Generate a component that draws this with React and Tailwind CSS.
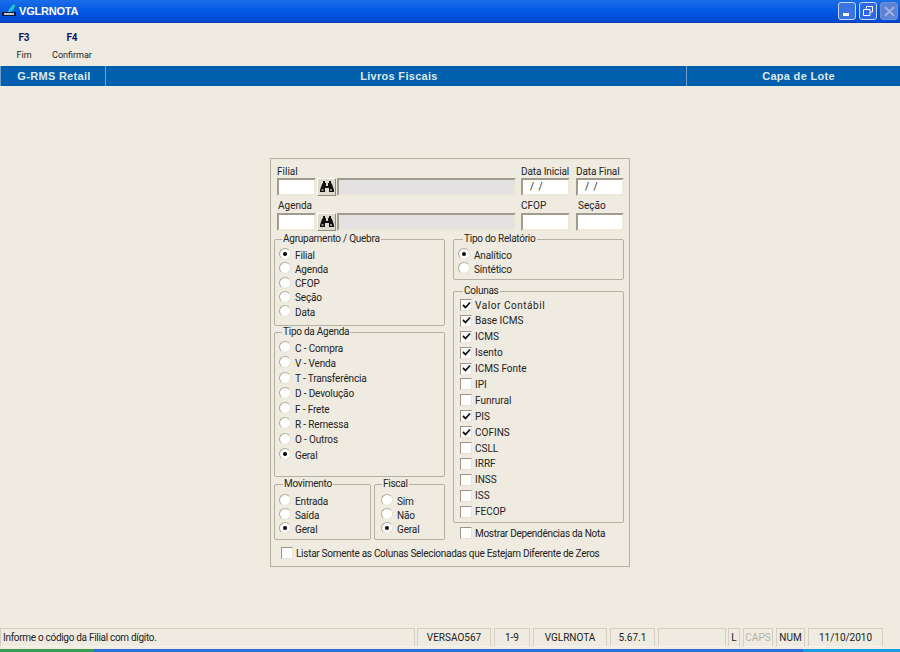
// App.jsx
import React from 'react';

const Radio = ({ label, checked }) => (
  <div className="flex items-center h-[14px]">
    <span className="w-3 h-3 rounded-full bg-white border border-[#e6e3d6] border-t-[#aeab9d] border-l-[#aeab9d] flex items-center justify-center shrink-0">
      {checked && <span className="w-1 h-1 rounded-full bg-black" />}
    </span>
    <span className="ml-[4px] pt-[2px] whitespace-nowrap tracking-[-0.15px]">{label}</span>
  </div>
);

const Check = ({ label, checked, textClass = '' }) => (
  <div className="flex items-center h-[14px]">
    <span className="w-[10px] h-[10px] box-content bg-white border border-[#e6e3d6] border-t-[#98958a] border-l-[#98958a] flex items-center justify-center shrink-0">
      {checked && (
        <svg width="9" height="9" viewBox="0 0 9 9">
          <path d="M1 4 L3.5 6.5 L8 1.5" fill="none" stroke="#111" strokeWidth="1.8" />
        </svg>
      )}
    </span>
    <span className={`ml-[3px] whitespace-nowrap ${textClass}`}>{label}</span>
  </div>
);

const Group = ({ title, className, legendClass = 'ml-[3px]', children }) => (
  <fieldset className={`border border-[#b4b1a2] rounded-[2px] pl-[4px] ${className}`}>
    <legend className={`px-[1px] leading-[12px] tracking-[-0.25px] ${legendClass}`}>{title}</legend>
    {children}
  </fieldset>
);

const Field = ({ className, children }) => (
  <div className={`h-[18px] bg-white border-2 border-[#ece9d8] border-t-[#a09d8e] border-l-[#a09d8e] leading-[14px] ${className}`}>
    {children}
  </div>
);

const Binoculars = () => (
  <button className="w-[19px] h-[18px] ml-[1px] bg-[#dedbce] border border-[#fff] border-r-[#8f8c7f] border-b-[#8f8c7f] flex items-center justify-center">
    <svg width="14" height="12" viewBox="0 0 14 12">
      <path
        d="M3 0h2v2h1v3h2V2h1V0h2v2l1 1 2 6v2H9V7H5v4H0V9l2-6 1-1z"
        fill="#111"
      />
      <rect x="1.5" y="8" width="2" height="2" fill="#8a8a8a" />
      <rect x="10" y="8" width="2" height="2" fill="#8a8a8a" />
    </svg>
  </button>
);

const StatusCell = ({ className, children }) => (
  <div className={`h-[19px] border border-[#d3d0c2] border-b-[#f7f5ec] flex items-center justify-center shrink-0 ${className}`}>
    {children}
  </div>
);

const agrupamento = ['Filial', 'Agenda', 'CFOP', 'Seção', 'Data'];
const agendas = ['C - Compra', 'V - Venda', 'T - Transferência', 'D - Devolução', 'F - Frete', 'R - Remessa', 'O - Outros', 'Geral'];
const colunas = [
  ['Valor Contábil', true],
  ['Base ICMS', true],
  ['ICMS', true],
  ['Isento', true],
  ['ICMS Fonte', true],
  ['IPI', false],
  ['Funrural', false],
  ['PIS', true],
  ['COFINS', true],
  ['CSLL', false],
  ['IRRF', false],
  ['INSS', false],
  ['ISS', false],
  ['FECOP', false],
];

export default function App() {
  return (
    <div className="w-[900px] h-[652px] overflow-hidden flex flex-col bg-[#efebe0] text-[10px] text-[#222] font-['Roboto','Liberation_Sans',sans-serif]">
      {/* barra de titulo */}
      <div className="h-[23px] shrink-0 flex items-center pl-[2px] pr-[2px] bg-gradient-to-b from-[#1a6ee8] via-[#0358e4] to-[#0349cf] border-b border-b-[#0e3fb0]">
        <svg width="16" height="14" viewBox="0 0 16 14" className="shrink-0">
          <path d="M6 8 C7 4 10 1 13 0 C13 4 11 7 8 8z" fill="#22c8c8" />
          <rect x="0" y="8" width="14" height="4" fill="#0c1a3e" />
          <rect x="2" y="9" width="10" height="2" fill="#b9c7da" />
        </svg>
        <span className="ml-[1px] text-[11px] font-bold text-white font-['Liberation_Sans',sans-serif] tracking-[-0.2px]">VGLRNOTA</span>
        <div className="ml-auto flex gap-[3px]">
          <div className="w-[18px] h-[18px] rounded-[3px] border border-[#c8d8f8] bg-[#3a73e4] flex items-end pl-[4px] pb-[3px]">
            <span className="w-[6px] h-[3px] bg-white" />
          </div>
          <div className="w-[18px] h-[18px] rounded-[3px] border border-[#c8d8f8] bg-[#2f68e2] flex items-center justify-center">
            <svg width="10" height="10" viewBox="0 0 10 10">
              <path d="M3.5 2.5V.5h6v5.5H7.5M.5 3.5h6.5v6H.5z" fill="none" stroke="#fff" />
            </svg>
          </div>
          <div className="w-[18px] h-[18px] rounded-[3px] border border-[#6e92dc] bg-[#5d83d2] flex items-center justify-center">
            <svg width="11" height="11" viewBox="0 0 11 11">
              <path d="M1 1 L10 10 M10 1 L1 10" stroke="#9fb4e0" strokeWidth="2" />
            </svg>
          </div>
        </div>
      </div>

      {/* barra de atalhos */}
      <div className="h-[43px] shrink-0 flex pt-[9px] pl-[6px] bg-[#efebe0]">
        <div className="w-[36px] flex flex-col items-center">
          <span className="font-bold text-[#14146e] leading-[12px]">F3</span>
          <span className="mt-[5px] leading-[12px] text-[9px]">Fim</span>
        </div>
        <div className="w-[60px] flex flex-col items-center">
          <span className="font-bold text-[#14146e] leading-[12px]">F4</span>
          <span className="mt-[5px] leading-[12px] text-[9px]">Confirmar</span>
        </div>
      </div>

      {/* faixa azul */}
      <div className="h-[20px] shrink-0 flex bg-[#0160ae] text-[#dfe8ee] font-bold text-[11px] tracking-[0.3px] font-['Liberation_Sans',sans-serif]">
        <div className="w-[106px] border-x border-[#6f9fd0] flex items-center justify-center pl-[2px]">G-RMS Retail</div>
        <div className="flex-1 flex items-center justify-center pl-[6px]">Livros Fiscais</div>
        <div className="w-[214px] border-l border-[#6f9fd0] flex items-center justify-center pl-[10px]">Capa de Lote</div>
      </div>

      {/* area principal */}
      <div className="flex-1 min-h-0 pt-[72px] pl-[270px]">
        <div className="w-[360px] h-[409px] border border-[#b4b1a2] px-[3px] pt-[7px]">
          {/* filial */}
          <div className="flex pl-[3px]">
            <div className="w-[244px]">
              <div className="leading-[12px]">Filial</div>
              <div className="flex">
                <Field className="w-[39px]" />
                <Binoculars />
                <Field className="w-[179px] ml-[1px] !bg-[#e4e1e3]" />
              </div>
            </div>
            <div className="w-[55px]">
              <div className="leading-[12px] whitespace-nowrap tracking-[-0.1px]">Data Inicial</div>
              <Field className="w-[49px] pl-[7px] tracking-[1px]">/ /</Field>
            </div>
            <div>
              <div className="leading-[12px] whitespace-nowrap tracking-[-0.1px]">Data Final</div>
              <Field className="w-[48px] pl-[7px] tracking-[1px]">/ /</Field>
            </div>
          </div>

          {/* agenda */}
          <div className="flex pl-[3px] mt-[4px]">
            <div className="w-[244px]">
              <div className="leading-[12px] pl-[1px]">Agenda</div>
              <div className="flex mt-[1px]">
                <Field className="w-[39px]" />
                <Binoculars />
                <Field className="w-[179px] ml-[1px] !bg-[#e4e1e3]" />
              </div>
            </div>
            <div className="w-[55px]">
              <div className="leading-[12px]">CFOP</div>
              <Field className="w-[49px] mt-[1px]" />
            </div>
            <div>
              <div className="leading-[12px] pl-[2px]">Seção</div>
              <Field className="w-[48px] mt-[1px]" />
            </div>
          </div>

          {/* grupos */}
          <div className="flex mt-[2px]">
            <div className="w-[171px]">
              <Group title="Agrupamento / Quebra" className="h-[93px]">
                <div className="flex flex-col gap-[0.25px] mt-[2px]">
                  {agrupamento.map((item, i) => (
                    <Radio key={item} label={item} checked={i === 0} />
                  ))}
                </div>
              </Group>
              <Group title="Tipo da Agenda" className="h-[151px]">
                <div className="flex flex-col gap-[1.3px] mt-[2px]">
                  {agendas.map((item) => (
                    <Radio key={item} label={item} checked={item === 'Geral'} />
                  ))}
                </div>
              </Group>
              <div className="flex mt-[1px]">
                <Group title="Movimento" className="w-[97px] h-[62px]" legendClass="ml-[4px]">
                  <div className="mt-[3px]">
                    <Radio label="Entrada" />
                    <Radio label="Saída" />
                    <Radio label="Geral" checked />
                  </div>
                </Group>
                <Group title="Fiscal" className="w-[71px] h-[62px] ml-[3px]">
                  <div className="mt-[3px] pl-[2px]">
                    <Radio label="Sim" />
                    <Radio label="Não" />
                    <Radio label="Geral" checked />
                  </div>
                </Group>
              </div>
            </div>

            <div className="w-[171px] ml-[8px]">
              <Group title="Tipo do Relatório" className="h-[47px]" legendClass="ml-[5px]">
                <div className="mt-[2px]">
                  <Radio label="Analítico" checked />
                  <Radio label="Sintético" />
                </div>
              </Group>
              <Group title="Colunas" className="h-[238px] mt-[5px]" legendClass="ml-[5px]">
                <div className="flex flex-col gap-[1.9px] pl-[2px] mt-[1px]">
                  {colunas.map(([label, checked]) => (
                    <Check
                      key={label}
                      label={label}
                      checked={checked}
                      textClass={label === 'Valor Contábil' ? 'tracking-[0.55px]' : ''}
                    />
                  ))}
                </div>
              </Group>
              <div className="mt-[3px] pl-[7px]">
                <Check label="Mostrar Dependências da Nota" textClass="tracking-[-0.28px]" />
              </div>
            </div>
          </div>

          <div className="mt-[6px] pl-[7px]">
            <Check label="Listar Somente as Colunas Selecionadas que Estejam Diferente de Zeros" textClass="tracking-[-0.28px]" />
          </div>
        </div>
      </div>

      {/* barra de status */}
      <div className="h-[24px] shrink-0 flex flex-col">
        <div className="flex">
          <StatusCell className="w-[415px] !justify-start pl-[2px] tracking-[-0.3px]">Informe o código da Filial com dígito.</StatusCell>
          <StatusCell className="w-[74px] ml-[2px]">VERSAO567</StatusCell>
          <StatusCell className="w-[36px] ml-[3px]">1-9</StatusCell>
          <StatusCell className="w-[74px] ml-[3px]">VGLRNOTA</StatusCell>
          <StatusCell className="w-[45px] ml-[3px]">5.67.1</StatusCell>
          <StatusCell className="w-[68px] ml-[3px]" />
          <StatusCell className="w-[12px] ml-[2px]">L</StatusCell>
          <StatusCell className="w-[30px] ml-[3px] text-[#b5b2a5]">CAPS</StatusCell>
          <StatusCell className="w-[29px] ml-[3px]">NUM</StatusCell>
          <StatusCell className="w-[75px] ml-[3px]">11/10/2010</StatusCell>
        </div>
        <div className="mt-[2px] h-[3px] flex">
          <div className="w-[94px] bg-[#3d9a4e]" />
          <div className="w-[709px] bg-[#2a6fdc]" />
          <div className="flex-1 bg-[#169be0]" />
        </div>
      </div>
    </div>
  );
}
